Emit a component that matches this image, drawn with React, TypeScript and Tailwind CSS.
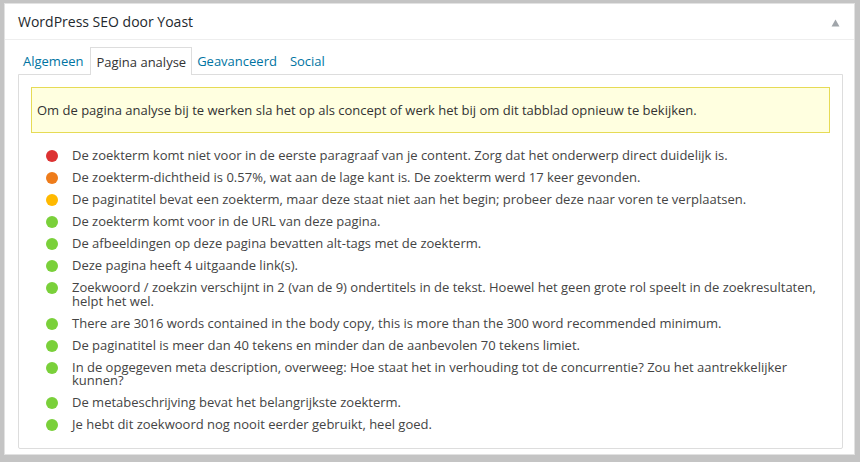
import React from "react";

type Item = { c: string; t: string };

const items: Item[] = [
  { c: "#dc3232", t: "De zoekterm komt niet voor in de eerste paragraaf van je content. Zorg dat het onderwerp direct duidelijk is." },
  { c: "#ee7c1b", t: "De zoekterm-dichtheid is 0.57%, wat aan de lage kant is. De zoekterm werd 17 keer gevonden." },
  { c: "#ffb900", t: "De paginatitel bevat een zoekterm, maar deze staat niet aan het begin; probeer deze naar voren te verplaatsen." },
  { c: "#7ad03a", t: "De zoekterm komt voor in de URL van deze pagina." },
  { c: "#7ad03a", t: "De afbeeldingen op deze pagina bevatten alt-tags met de zoekterm." },
  { c: "#7ad03a", t: "Deze pagina heeft 4 uitgaande link(s)." },
  { c: "#7ad03a", t: "Zoekwoord / zoekzin verschijnt in 2 (van de 9) ondertitels in de tekst. Hoewel het geen grote rol speelt in de zoekresultaten, helpt het wel." },
  { c: "#7ad03a", t: "There are 3016 words contained in the body copy, this is more than the 300 word recommended minimum." },
  { c: "#7ad03a", t: "De paginatitel is meer dan 40 tekens en minder dan de aanbevolen 70 tekens limiet." },
  { c: "#7ad03a", t: "In de opgegeven meta description, overweeg: Hoe staat het in verhouding tot de concurrentie? Zou het aantrekkelijker kunnen?" },
  { c: "#7ad03a", t: "De metabeschrijving bevat het belangrijkste zoekterm." },
  { c: "#7ad03a", t: "Je hebt dit zoekwoord nog nooit eerder gebruikt, heel goed." },
];

export default function App() {
  return (
    <div
      className="w-[860px] h-[462px] bg-[#c4c4c4] pl-[4px] pt-[3px] pr-[5px] pb-[7px]"
      style={{ fontFamily: '"Open Sans", "Liberation Sans", sans-serif' }}
    >
      <div className="h-full bg-white border border-[#e2e2e2] flex flex-col">
        <div className="h-[36px] flex items-center justify-between pl-[13px] pr-[14px] border-b border-[#eeeeee]">
          <h2 className="text-[14px] text-[#23282d] leading-none pt-[1px]">WordPress SEO door Yoast</h2>
          <svg width="9" height="8" viewBox="0 0 9 8" className="mt-[2px]">
            <polygon points="4.5,0.5 8.5,7.5 0.5,7.5" fill="#a0a5aa" />
          </svg>
        </div>
        <div className="pl-[13px] pr-[11px] pt-[6px]">
          <div className="flex items-end text-[13px] leading-none">
            <span className="px-[5px] h-[27px] flex items-center pt-[1px] text-[#0074a2]">Algemeen</span>
            <span className="ml-[2px] px-[5px] h-[28px] flex items-center pt-[1px] text-[#333] bg-white border border-[#dddddd] border-b-0 relative top-[1px]">
              Pagina analyse
            </span>
            <span className="px-[5px] h-[27px] flex items-center pt-[1px] text-[#0074a2]">Geavanceerd</span>
            <span className="ml-[3px] px-[5px] h-[27px] flex items-center pt-[1px] text-[#0074a2]">Social</span>
          </div>
          <div className="border border-[#dddddd] rounded-b-[2px] h-[375px] pt-[12px] px-[12px]">
            <div className="bg-[#ffffe0] border border-[#e6db55] px-[5px] py-[12px] text-[13px] leading-[20px] text-[#333]">
              Om de pagina analyse bij te werken sla het op als concept of werk het bij om dit tabblad opnieuw te bekijken.
            </div>
            <ul className="mt-[16px] flex flex-col gap-[8.5px] pr-[8px]">
              {items.map((it, i) => (
                <li key={i} className="flex items-start text-[13px] leading-[13.5px] text-[#444]">
                  <span
                    className="shrink-0 w-[12px] h-[12px] rounded-full ml-[15px] mr-[14px] mt-[1px]"
                    style={{ backgroundColor: it.c }}
                  />
                  <span>{it.t}</span>
                </li>
              ))}
            </ul>
          </div>
        </div>
      </div>
    </div>
  );
}
